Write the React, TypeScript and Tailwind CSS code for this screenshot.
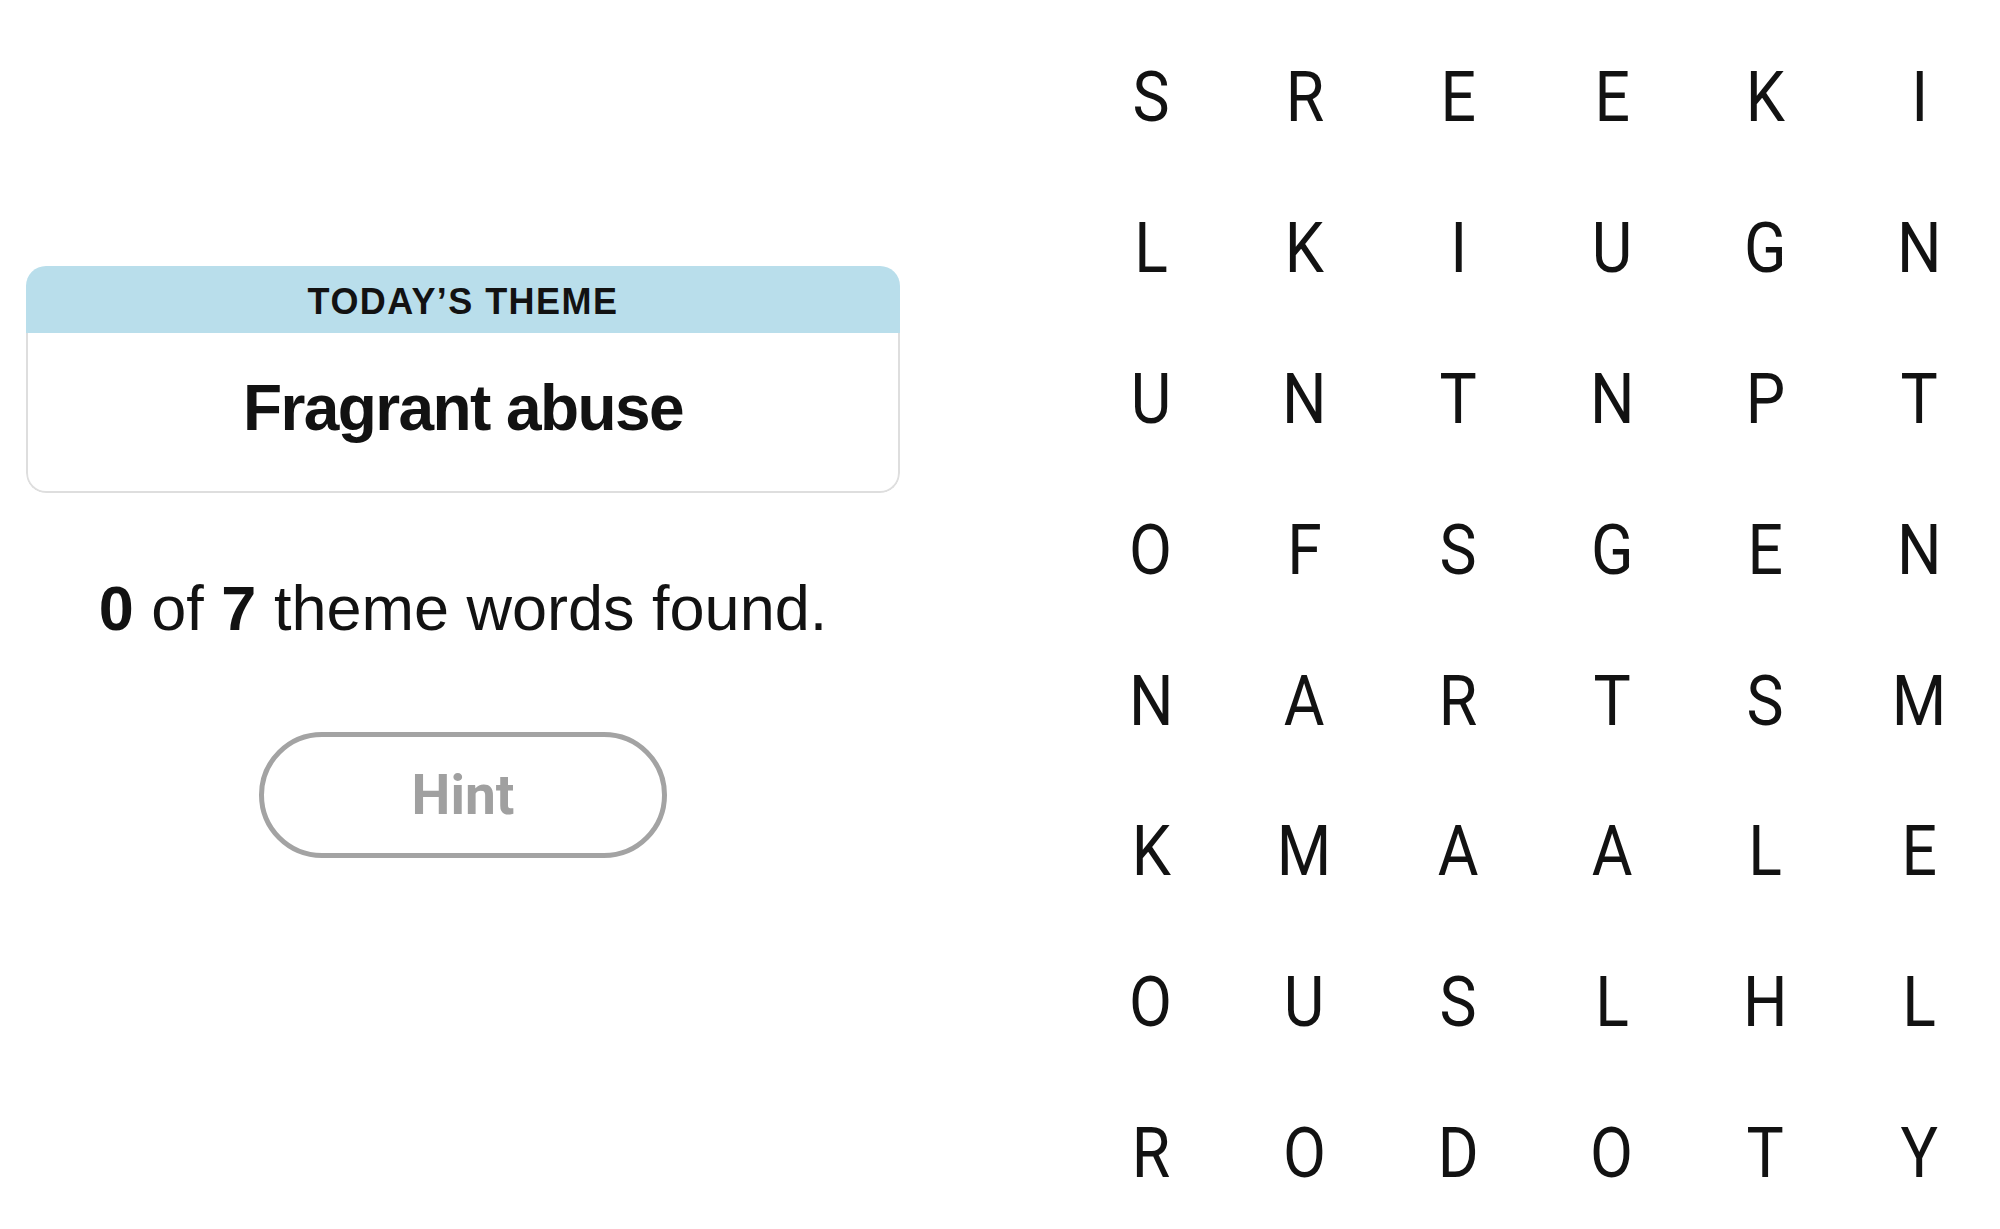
import React from 'react';

const rows = [
  'SREEKI',
  'LKIUGN',
  'UNTNPT',
  'OFSGEN',
  'NARTSM',
  'KMAALE',
  'OUSLHL',
  'RODOTY',
];

function ThemeCard() {
  return (
    <div className="w-[874px] overflow-hidden rounded-[20px]">
      <div className="flex h-[67px] items-center justify-center bg-[#b9deeb] pt-[4px]">
        <span className="font-['Liberation_Sans',sans-serif] text-[36px] leading-none font-bold tracking-[0.04em] text-[#121212]">
          TODAY’S THEME
        </span>
      </div>
      <div className="flex h-[160px] items-center justify-center rounded-b-[20px] border-x-2 border-b-2 border-[#dedede] bg-white pb-[8px]">
        <span className="font-['Liberation_Sans',sans-serif] text-[64px] leading-none font-bold tracking-[-1.6px] text-[#121212]">
          Fragrant abuse
        </span>
      </div>
    </div>
  );
}

function LetterGrid() {
  return (
    <div className="mr-[4px] grid w-[922px] grid-cols-6 pt-[22px]">
      {rows.flatMap((row, r) =>
        row.split('').map((ch, c) => (
          <div
            key={`${r}-${c}`}
            className="flex h-[149px] items-center justify-center font-['Roboto',sans-serif] text-[71px] leading-none text-[#121212]"
          >
            <span className="inline-block scale-x-[0.88]">{ch}</span>
          </div>
        ))
      )}
    </div>
  );
}

export default function App() {
  return (
    <div className="flex h-[1229px] w-[2000px] justify-between overflow-hidden bg-white">
      <div className="flex w-[926px] flex-col items-center px-[26px] pt-[266px]">
        <ThemeCard />
        <p className="mt-[84px] font-['Liberation_Sans',sans-serif] text-[63px] leading-none text-[#121212]">
          <span className="font-bold">0</span> of <span className="font-bold">7</span> theme words found.
        </p>
        <button className="mt-[92px] flex h-[126px] w-[408px] items-center justify-center rounded-full border-[5px] border-[#a3a3a3] bg-white font-['Roboto',sans-serif] text-[55px] leading-none font-bold text-[#a0a0a0]">
          Hint
        </button>
      </div>
      <LetterGrid />
    </div>
  );
}
